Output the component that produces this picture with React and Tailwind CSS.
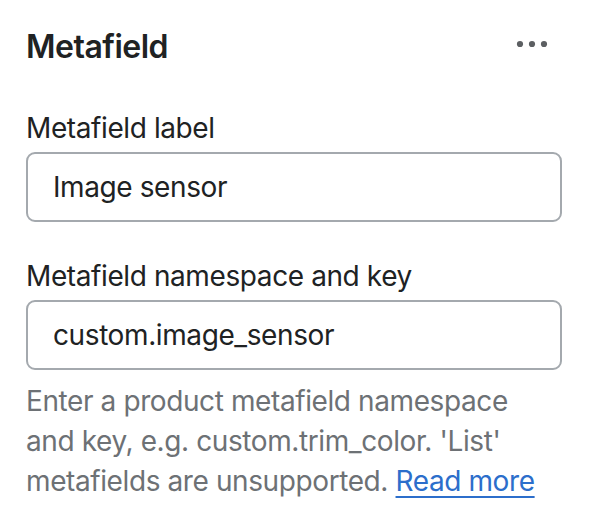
import React from "react";

export default function App() {
  return (
    <div className="bg-white w-[592px] h-[532px] pl-[26px] pr-[30px] pt-[27px] font-['Inter','Noto_Sans',sans-serif] text-[#202223]">
      <div className="flex items-center justify-between h-[40px]">
        <h2 className="text-[32px] leading-[40px] font-semibold tracking-[-0.5px]">Metafield</h2>
        <svg width="32" height="8" viewBox="0 0 32 8" className="mr-[14px] mb-[6px]" fill="#5c5f62">
          <circle cx="4" cy="4" r="3.1" />
          <circle cx="16" cy="4" r="3.1" />
          <circle cx="28" cy="4" r="3.1" />
        </svg>
      </div>

      <div className="mt-[41px] tracking-[-0.4px]">
        <label className="block text-[28px] leading-[40px]">Metafield label</label>
        <div className="mt-[4px] h-[70px] border-2 border-[#a4a9ae] rounded-[9px] pl-[25px] flex items-center text-[28px] leading-[40px]">
          Image sensor
        </div>
      </div>

      <div className="mt-[34px] tracking-[-0.4px]">
        <label className="block text-[28px] leading-[40px]">Metafield namespace and key</label>
        <div className="mt-[4px] h-[70px] border-2 border-[#a4a9ae] rounded-[9px] pl-[25px] flex items-center text-[28px] leading-[40px]">
          custom.image_sensor
        </div>
      </div>

      <p className="mt-[11px] text-[28px] leading-[40px] text-[#6d7175] tracking-[-0.4px]">
        Enter a product metafield namespace
        <br />
        and key, e.g. custom.trim_color. 'List'
        <br />
        metafields are unsupported.{" "}
        <a href="#" className="text-[#2c6ecb] underline decoration-2 underline-offset-[5px]">
          Read more
        </a>
      </p>
    </div>
  );
}
